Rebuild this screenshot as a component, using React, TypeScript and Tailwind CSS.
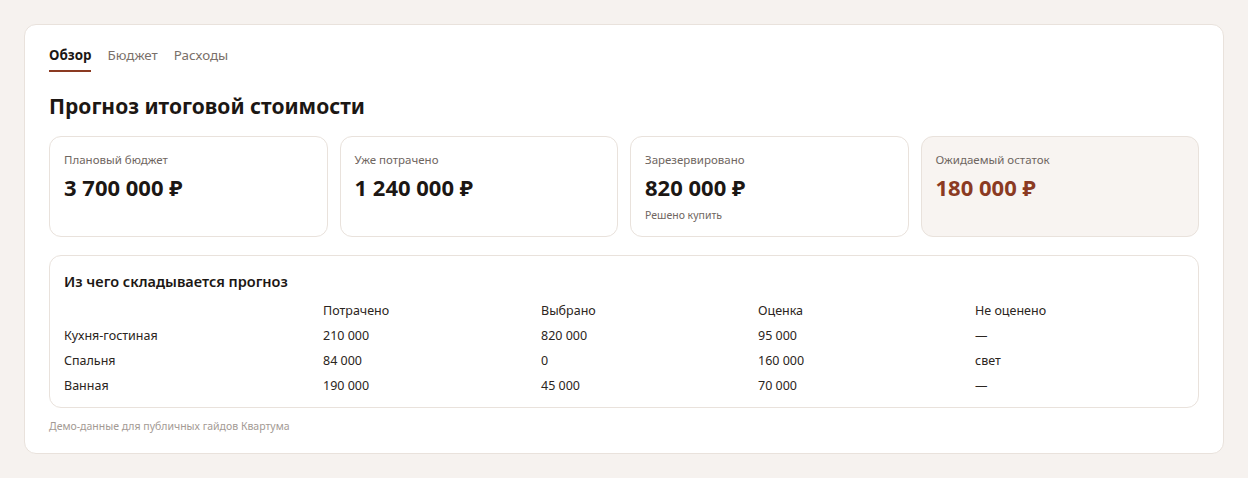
const stats = [
  { label: "Плановый бюджет", value: "3 700 000 ₽" },
  { label: "Уже потрачено", value: "1 240 000 ₽" },
  { label: "Зарезервировано", value: "820 000 ₽", note: "Решено купить" },
  { label: "Ожидаемый остаток", value: "180 000 ₽", accent: true },
];

const rows = [
  { room: "Кухня-гостиная", spent: "210 000", chosen: "820 000", estimate: "95 000", missing: "—" },
  { room: "Спальня", spent: "84 000", chosen: "0", estimate: "160 000", missing: "свет" },
  { room: "Ванная", spent: "190 000", chosen: "45 000", estimate: "70 000", missing: "—" },
];

export default function App() {
  return (
    <div className="min-h-[478px] bg-[#f6f2ef] p-6 font-['Segoe_UI','Noto_Sans',sans-serif] text-[#1c1714]">
      <div className="bg-white border border-[#e9e2dc] rounded-xl px-6 pt-[20px] pb-[19px]">
        {/* Tabs */}
        <div className="flex gap-4 text-[13.4px]">
          <div className="font-bold text-[#1c1714] pb-[5px] border-b-2 border-[#8b3a22]">Обзор</div>
          <div className="text-[#7a706a]">Бюджет</div>
          <div className="text-[#7a706a]">Расходы</div>
        </div>

        <h1 className="mt-[20px] text-[21px] font-bold leading-7">Прогноз итоговой стоимости</h1>

        {/* Stat cards */}
        <div className="mt-[16px] grid grid-cols-4 gap-3">
          {stats.map((s) => (
            <div
              key={s.label}
              className={`h-[101px] rounded-xl border border-[#e9e2dc] px-[14px] pt-[15px] ${s.accent ? "bg-[#f8f4f1]" : "bg-white"}`}
            >
              <div className="text-[11.5px] text-[#6f6661] leading-4">{s.label}</div>
              <div className={`mt-[5px] text-[22px] font-bold leading-7 ${s.accent ? "text-[#8b3a22]" : ""}`}>{s.value}</div>
              {s.note && <div className="mt-[6px] text-[10.5px] text-[#6f6661] leading-4">{s.note}</div>}
            </div>
          ))}
        </div>

        {/* Breakdown */}
        <div className="mt-[18px] rounded-xl border border-[#e9e2dc] px-[14px] pt-[15px] pb-[8px]">
          <h2 className="text-[14.5px] font-semibold leading-5">Из чего складывается прогноз</h2>
          <table className="mt-[8px] w-full text-[12.5px] text-[#2b2521] table-fixed">
            <colgroup>
              <col className="w-[259px]" />
              <col className="w-[218px]" />
              <col className="w-[217px]" />
              <col className="w-[217px]" />
              <col />
            </colgroup>
            <thead>
              <tr className="h-[25px] text-left">
                <th className="font-normal"></th>
                <th className="font-normal">Потрачено</th>
                <th className="font-normal">Выбрано</th>
                <th className="font-normal">Оценка</th>
                <th className="font-normal">Не оценено</th>
              </tr>
            </thead>
            <tbody>
              {rows.map((r) => (
                <tr key={r.room} className="h-[25px]">
                  <td>{r.room}</td>
                  <td>{r.spent}</td>
                  <td>{r.chosen}</td>
                  <td>{r.estimate}</td>
                  <td>{r.missing}</td>
                </tr>
              ))}
            </tbody>
          </table>
        </div>

        <div className="mt-[10px] text-[10.5px] leading-4 text-[#a39a94]">Демо-данные для публичных гайдов Квартума</div>
      </div>
    </div>
  );
}
